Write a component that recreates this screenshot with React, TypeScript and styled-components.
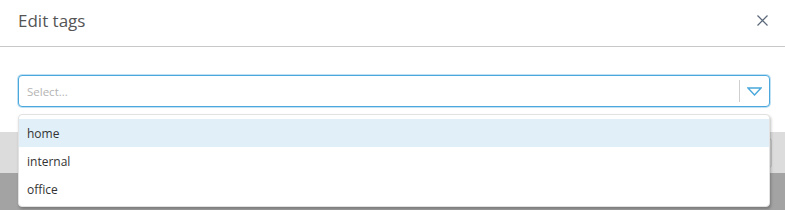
import React from "react";
import styled, { createGlobalStyle } from "styled-components";

const Global = createGlobalStyle`
  html, body { margin: 0; padding: 0; background: #a3a3a3; }
  body { font-family: "Open Sans", "Noto Sans", sans-serif; width: 785px; height: 210px; overflow: hidden; }
`;

const Modal = styled.div`
  width: 785px;
  background: #fff;
  display: flex;
  flex-direction: column;
`;

const Header = styled.div`
  height: 47px;
  box-sizing: border-box;
  border-bottom: 1px solid #c8c8c8;
  display: flex;
  align-items: center;
  justify-content: space-between;
  padding: 0 16px 5px 18px;
`;

const Title = styled.h1`
  margin: 0;
  font-size: 17px;
  font-weight: 400;
  color: #555;
`;

const CloseButton = styled.button`
  border: 0;
  background: transparent;
  padding: 0;
  width: 14px;
  height: 14px;
  display: flex;
  align-items: center;
  justify-content: center;
  cursor: pointer;
`;

const Body = styled.div`
  padding: 28px 15px 25px 18px;
  height: 85px;
  box-sizing: border-box;
`;

const SelectWrap = styled.div`
  position: relative;
`;

const Control = styled.div`
  height: 32px;
  box-sizing: border-box;
  border: 1px solid #4aa8dc;
  border-radius: 4px;
  box-shadow: 0 0 0 1px rgba(74, 168, 220, 0.35);
  display: flex;
  align-items: center;
  background: #fff;
`;

const Placeholder = styled.span`
  flex: 1;
  padding-left: 8px;
  font-size: 11.5px;
  color: #b4b4b4;
`;

const Separator = styled.span`
  width: 1px;
  align-self: stretch;
  margin: 4px 0;
  background: #cfcfcf;
`;

const Arrow = styled.span`
  width: 29px;
  display: flex;
  align-items: center;
  justify-content: center;
`;

const Menu = styled.ul`
  position: absolute;
  top: 39px;
  left: 0;
  right: 0;
  margin: 0;
  padding: 4px 0 3px;
  list-style: none;
  background: #fff;
  border: 1px solid #e2e2e2;
  border-radius: 4px;
  box-shadow: 1px 2px 3px rgba(0, 0, 0, 0.25);
  z-index: 2;
`;

const Option = styled.li<{ $active?: boolean }>`
  height: 28px;
  display: flex;
  align-items: center;
  padding-left: 8px;
  font-size: 12px;
  color: #333;
  background: ${(p) => (p.$active ? "#e0eff8" : "#fff")};
`;

const Footer = styled.div`
  height: 41px;
  background: #dcdcdc;
  display: flex;
  align-items: center;
  justify-content: flex-end;
  padding-right: 13px;
`;

const FooterButton = styled.button`
  width: 80px;
  height: 30px;
  border: 1px solid #c2c2c2;
  border-radius: 3px;
  background: #d8d8d8;
`;

export default function App() {
  return (
    <>
      <Global />
      <Modal>
        <Header>
          <Title>Edit tags</Title>
          <CloseButton aria-label="Close">
            <svg width="11" height="11" viewBox="0 0 11 11">
              <path d="M0.5 0.5 L10.5 10.5 M10.5 0.5 L0.5 10.5" stroke="#5b677a" strokeWidth="1.2" fill="none" />
            </svg>
          </CloseButton>
        </Header>
        <Body>
          <SelectWrap>
            <Control>
              <Placeholder>Select...</Placeholder>
              <Separator />
              <Arrow>
                <svg width="15" height="9" viewBox="0 0 15 9">
                  <path d="M1 1 L14 1 L7.5 8 Z" stroke="#4aa8dc" strokeWidth="1.4" fill="none" strokeLinejoin="miter" />
                </svg>
              </Arrow>
            </Control>
            <Menu>
              <Option $active>home</Option>
              <Option>internal</Option>
              <Option>office</Option>
            </Menu>
          </SelectWrap>
        </Body>
        <Footer>
          <FooterButton />
        </Footer>
      </Modal>
    </>
  );
}
